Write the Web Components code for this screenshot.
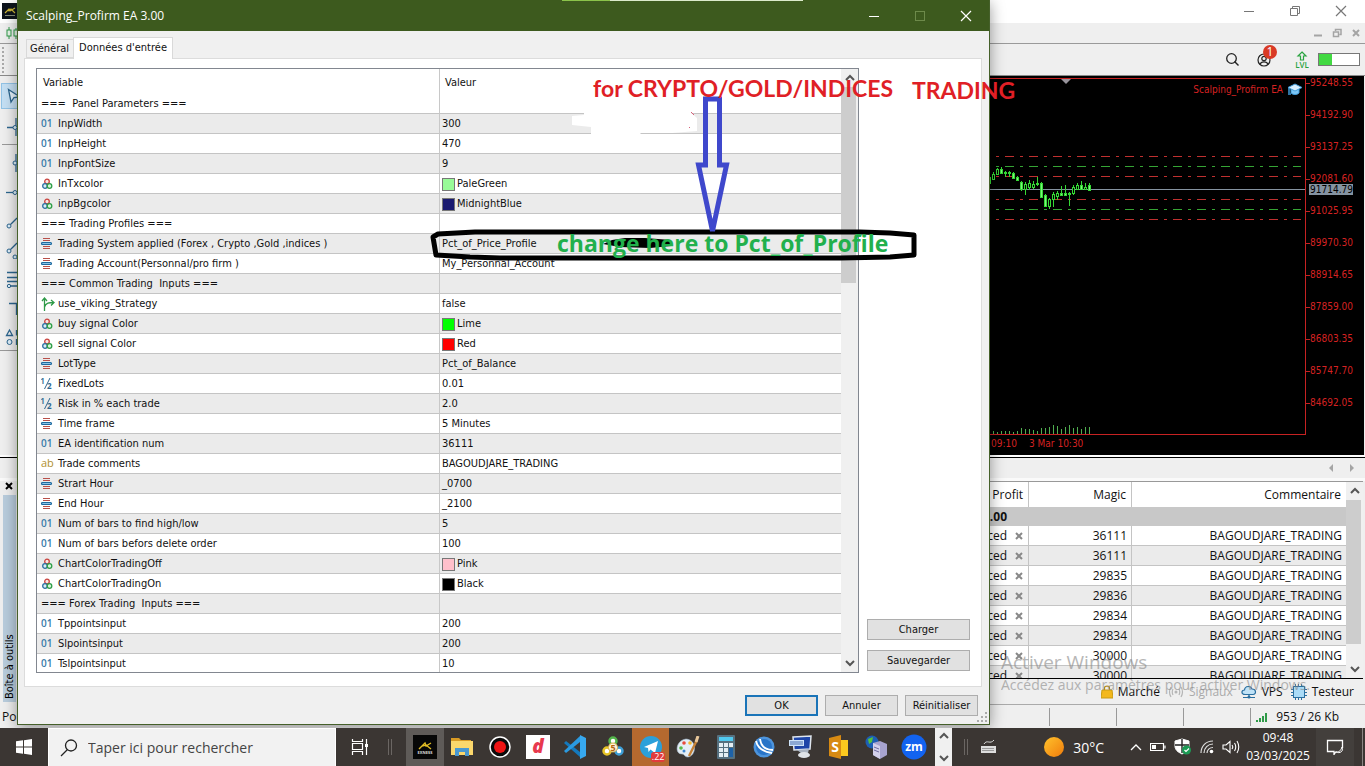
<!DOCTYPE html>
<html lang="fr">
<head>
<meta charset="utf-8">
<title>Scalping_Profirm EA 3.00</title>
<style>
html, body { margin: 0; height: 100%; overflow: hidden; }
body { font-family: "Open Sans", "Noto Sans", sans-serif; font-size: 12px; color: #111; }
</style>
</head>
<body>
<desktop-shell>
  <terminal-window></terminal-window>
  <inputs-dialog slot="window" heading="Scalping_Profirm EA 3.00"></inputs-dialog>
  <paint-notes slot="notes"></paint-notes>
  <task-bar slot="taskbar"></task-bar>
</desktop-shell>
<script>
const RESET = `
*{box-sizing:border-box}
button{font:inherit;color:inherit;background:none;border:0;padding:0;margin:0;display:flex;align-items:center;justify-content:center}
table{border-collapse:separate;border-spacing:0;table-layout:fixed;width:100%}
td,th{padding:0;font-weight:400;text-align:left;white-space:nowrap}
ul{list-style:none;margin:0;padding:0}`;

class Base extends HTMLElement {
  constructor() {
    super();
    this.attachShadow({ mode: 'open' });
  }
  connectedCallback() {
    this.shadowRoot.innerHTML = `<style>${RESET}${this.css()}</style>${this.html()}`;
  }
}

/* ---------- icons ---------- */
const P = (d, s = '#333', w = 1, f = 'none') => `<path d="${d}" fill="${f}" stroke="${s}" stroke-width="${w}"/>`;
const ICONS = {
  int: [14, 14, `<text x="0" y="10" font-size="10" font-weight="600" fill="#3a7ba8" font-family="Open Sans">01</text>`],
  str: [14, 14, `<text x="0" y="10" font-size="11" fill="#b0902e" font-family="Open Sans">ab</text>`],
  dbl: [14, 14, `<text x="-1" y="7" font-size="9" font-weight="600" fill="#2c668f" font-family="Open Sans">1</text><text x="6" y="12" font-size="8" font-weight="700" fill="#2c668f" font-family="Open Sans">2</text>` + P('M9 1L3.500 12', '#2c668f')],
  col: [14, 14, `<g stroke-width="1.300"><circle cx="6" cy="4.500" r="2.300" fill="#fbe6e4" stroke="#c9443f"/><circle cx="4" cy="9" r="2.300" fill="#d9ecf8" stroke="#2a6fa0"/><circle cx="8.500" cy="9" r="2.300" fill="#d8f5dd" stroke="#2e9e47"/></g>`],
  enum: [14, 14, P('M2 1.500H9M2 3.500H9M2 9.500H9M2 11.500H9', '#b9504a') + `<rect x=".5" y="5.500" width="10" height="2" rx="1" fill="#8cc4e6" stroke="#1f6aa0" stroke-width="1.200"/>`],
  bool: [14, 14, P('M3.500 14V1.500M1 4L3.500 1L6 4M3.500 10C5 5.500 8 5.500 13 5.500M10 3L13 5.500L10 8.500', '#2f9a48', 1.3)],
  min: [12, 12, P('M1 6.500H11', 'currentColor')],
  max: [12, 12, `<rect x="1.500" y="1.500" width="9" height="9" fill="none" stroke="currentColor"/>`],
  close: [12, 12, P('M1 1L11 11M11 1L1 11', 'currentColor', 1.2)],
  restore: [12, 12, P('M1.500 3.500H8.500V10.500H1.500ZM3.500 3V1.500H10.500V8.500H9', 'currentColor')],
  bmin: [10, 10, P('M1 7.500H9', 'currentColor', 2)],
  bres: [10, 10, P('M1.500 4H6.500V8.500H1.500ZM3.500 3V1.500H9V6.500H7.500', 'currentColor', 1.5)],
  bclose: [10, 10, P('M2 2L8 8M8 2L2 8', 'currentColor', 2)],
  up: [12, 12, P('M2 8L6 4L10 8', '#555', 2)],
  down: [12, 12, P('M2 4L6 8L10 4', '#555', 2)],
  left: [6, 8, P('M5 0V8L1 4Z', 'none', 0, '#a5a5a5')],
  right: [6, 8, P('M1 0V8L5 4Z', 'none', 0, '#a5a5a5')],
  find: [16, 16, P('M9.500 9.500L13.500 13.500', '#222', 1.4) + `<circle cx="6.500" cy="6.500" r="4.800" fill="none" stroke="#222" stroke-width="1.300"/>`],
  user: [14, 14, `<circle cx="7" cy="7" r="6" fill="none" stroke="#222" stroke-width="1.200"/><circle cx="7" cy="5.500" r="2.200" fill="none" stroke="#222" stroke-width="1.200"/>` + P('M3 11.500C4 8 10 8 11 11.500', '#222', 1.2)],
  lvl: [14, 18, P('M7 1L11 5H8.500V9H5.500V5H3Z', '#29a33f', 1.2) + `<text x="7" y="17" text-anchor="middle" font-size="8" font-weight="600" fill="#29a33f" font-family="Open Sans">LVL</text>`],
  cap: [16, 14, P('M4 6V10C6 12 10 12 12 10V6', '#3f9bd8', 1, '#7cc6f5') + P('M8 1L15 4.500L8 8L1 4.500Z', '#3f9bd8', 1, '#d9f0ff') + P('M2 5V10M1 11H4', '#3f9bd8', 1.5)],
  brand: [16, 16, `<rect width="16" height="16" fill="#0d141c"/>` + P('M3 10L7 6L8 8L13 5M6 8L9 6L13 10', '#cdb637', 1.2) + P('M3 12.500H13', '#87907a')],
  candles: [11, 12, P('M3 0V12M10 1V12', '#2f9a48') + `<rect x="1" y="3" width="4" height="6" fill="#e9f6ea" stroke="#2f9a48"/><rect x="8" y="3" width="4" height="6" fill="#e9f6ea" stroke="#2f9a48"/>`],
  tcur: [10, 16, P('M1.500 1.500L13 9L7 9.500L4 14Z', '#2c668f', 1.3, '#e5f2fb')],
  tcross: [12, 18, P('M2 9.500H8M11 0V18', '#2c668f', 1.3) + `<circle cx="10" cy="9.500" r="2" fill="#dff0fb" stroke="#2c668f"/>`],
  tv: [12, 18, P('M11 0V18', '#2c668f', 1.3) + `<circle cx="10" cy="9" r="2" fill="#dff0fb" stroke="#2c668f"/>`],
  th: [12, 18, P('M1 9.500H8', '#2c668f', 1.3) + `<circle cx="10" cy="9.500" r="2" fill="#dff0fb" stroke="#2c668f"/>`],
  tt: [12, 18, P('M5 13L12 6', '#2c668f', 1.3) + `<circle cx="4" cy="14" r="2" fill="#dff0fb" stroke="#2c668f"/>`],
  tch: [12, 18, P('M5 9L12 2', '#2c668f', 1.3) + `<circle cx="4" cy="10" r="2" fill="#dff0fb" stroke="#2c668f"/><circle cx="10" cy="16" r="2" fill="#dff0fb" stroke="#2c668f"/>`],
  tf: [12, 18, P('M2 2.500H12M2 7.500H12M2 11.500H12M5 16H12', '#2c668f', 1.3) + `<circle cx="4" cy="16" r="1.700" fill="#dff0fb" stroke="#2c668f"/>`],
  ttx: [12, 18, P('M4 4.500H12M11.500 4V16', '#2c668f', 1.3)],
  tsh: [12, 18, P('M4.500 2L7.500 7.500H1.500ZM11.500 2V7.500M11.500 11V17', '#2c668f', 1.3) + `<circle cx="4.500" cy="14" r="2.500" fill="#dff0fb" stroke="#2c668f"/>`],
  bag: [12, 14, P('M3.500 5V3C3.500 .5 8.500 .5 8.500 3V5', '#b58b1a', 1.2) + P('M1 5H11L12 13H0Z', '#c99b12', 1, '#f3b81c')],
  sig: [16, 12, P('M3 1Q0 6 3 11M5 3Q3.500 6 5 9M13 1Q16 6 13 11M11 3Q12.500 6 11 9', '#b5b5b5', 1.2) + `<circle cx="8" cy="6" r="1.500" fill="#b5b5b5"/>`],
  cloud: [16, 14, P('M4 9.500C0 9.500 0 5 3.500 5C4 .5 10 .5 11 4C15.500 4 15.500 9.500 12 9.500Z', '#2a6fa0', 1.2, '#bfe2f7') + P('M8 9.500V12M2 12.500H14', '#2a6fa0', 1.2) + `<circle cx="8" cy="12" r="1.500" fill="#2a6fa0"/>`],
  chip: [16, 16, P('M4.500 0V16M7.500 0V16M10.500 0V16M0 5.500H16M0 8.500H16M0 11.500H16', '#2a6fa0') + `<rect x="2.500" y="2.500" width="11" height="11" fill="#a9dbf7" stroke="#2a6fa0"/>`],
  bars: [12, 10, P('M1 10V8M4 10V6M7 10V4M10 10V1', '#2f9a48', 2)],
  win: [16, 16, `<g fill="#fff"><path d="M0 2.300L7 1.300V7.500H0ZM8 1.200L16 0V7.500H8ZM0 8.500H7V14.700L0 13.700ZM8 8.500H16V16L8 14.800Z"/></g>`],
  mag: [18, 18, P('M7.500 10.500L1 17', '#222', 1.3) + `<circle cx="11" cy="6.500" r="5.500" fill="none" stroke="#222" stroke-width="1.300"/>`],
  tview: [18, 16, P('M1.500 0V2.500H11.500V0M1.500 16V12.500H11.500V16M1.500 4.500H11.500V10.500H1.500ZM15.500 0V16', '#fff', 1.2) + `<rect x="14" y="5" width="3" height="3" fill="#fff"/>`],
  exness: [24, 24, `<rect width="24" height="24" fill="#070707"/>` + P('M6 14L12 8L13 11L18 8M9 11L13 10L18 14', '#e2bd25', 1.4) + `<text x="12" y="19" text-anchor="middle" font-size="4" font-weight="700" fill="#ddd" font-family="Open Sans">EXNESS</text>`],
  folder: [22, 20, P('M0 1H8L10 3H20V8H0Z', 'none', 0, '#d99b24') + `<rect y="4" width="22" height="14" fill="#fbd76c"/>` + P('M4 19V11H18V19H14V15H8V19Z', 'none', 0, '#4a98d0')],
  rec: [22, 22, `<circle cx="11" cy="11" r="10" fill="#0b0b0b" stroke="#fff" stroke-width="1.500"/><circle cx="11" cy="11" r="6" fill="#f01414"/>`],
  dd: [24, 24, `<rect width="24" height="24" fill="#fff"/>` + `<text x="12" y="18" text-anchor="middle" font-size="19" font-weight="800" font-style="italic" fill="#e8394e" font-family="Open Sans">d</text>`],
  code: [24, 24, P('M1 8L3 6L17 17V22Z', 'none', 0, '#1479bd') + P('M1 16L3 18L17 7V1Z', 'none', 0, '#2b9ae0') + P('M17 0L23 3V21L17 24Z', 'none', 0, '#37a9f0')],
  mt5: [22, 22, `<circle cx="11" cy="5" r="3.500" fill="#fff" stroke="#54b64c" stroke-width="2.500"/><circle cx="5" cy="15" r="3.500" fill="#fff" stroke="#e6c427" stroke-width="2.500"/><circle cx="17" cy="15" r="3.500" fill="#fff" stroke="#3d9fd8" stroke-width="2.500"/><circle cx="11" cy="11.500" r="4.500" fill="#fff6d8" stroke="#d8b04a"/><text x="11" y="15" text-anchor="middle" font-size="9" font-weight="700" fill="#b5640f" font-family="Open Sans">5</text>`],
  tg: [24, 24, `<circle cx="12" cy="12" r="11" fill="#2ba0da"/>` + P('M5 12L19 6L16 18L11.500 14.500L9.500 17L9 13Z', 'none', 0, '#fff')],
  paint: [24, 22, P('M10 3C0 4 -2 18 6 18C9 18 8 21 12 21C20 20 22 4 10 3Z', '#9fb6c9', .6, '#e4edf4') + `<circle cx="5" cy="12" r="1.800" fill="#57b947"/><circle cx="8" cy="7" r="1.800" fill="#e84b3b"/><circle cx="14" cy="7" r="1.800" fill="#f4b72e"/><circle cx="8" cy="15" r="1.500" fill="#3d86d0"/>` + P('M13 20L21 4', '#c58136', 2.4) + P('M20 6L22 0', '#e8c79a', 3)],
  calc: [18, 24, `<rect width="18" height="24" rx="1" fill="#56707f"/><rect x="2" y="2" width="14" height="4" fill="#51c9ef"/><g fill="#e4eef4"><path d="M2 8h4v4H2zM7 8h4v4H7zM12 8h4v4h-4zM2 13h4v4H2zM7 13h4v4H7zM2 18h4v4H2zM7 18h4v4H7z"/></g><rect x="12" y="13" width="4" height="9" fill="#1d62a8"/>`],
  blue: [22, 22, `<circle cx="11" cy="11" r="10.500" fill="#4d94dc"/><circle cx="11" cy="11" r="8" fill="#2874c8"/>` + P('M3 5C5 13 11 16 19 17M7 3C8 11 13 14 20 14', '#fff', 1.8)],
  pc: [24, 24, P('M4 2L22 1L21 14L5 15Z', '#dfe6ee', 1.5, '#1e45a8') + P('M8 15L20 14L19 18L12 18Z', 'none', 0, '#aab4c2') + `<ellipse cx="15" cy="20" rx="6" ry="3" fill="#dfe3e8"/><rect x="0" y="5" width="15" height="6" fill="#cfe3f8"/>` + P('M1 7H14M1 9H14', '#4b6fae', 1)],
  s5: [20, 24, `<rect x="8" y="5" width="11" height="16" fill="#fbc91f"/>` + P('M0 3L12 0V24L0 21Z', 'none', 0, '#d78a12') + `<text x="6" y="17" text-anchor="middle" font-size="14" font-weight="700" fill="#fff" font-family="Open Sans">S</text>`],
  srv: [24, 24, `<circle cx="7" cy="7" r="6.500" fill="#1d5fb4"/>` + P('M3 4L8 2L7 7L4 9Z', 'none', 0, '#54c23c') + P('M8 8L15 6L22 9V20L15 24L8 20Z', 'none', 0, '#a7a3cf') + P('M8 8L15 11V24L8 20Z', 'none', 0, '#d4d1ec') + P('M9 12L14 14M9 15L14 17', '#6d699f', 1)],
  zm: [26, 26, `<circle cx="13" cy="13" r="12.500" fill="#1263f0"/><text x="13" y="17" text-anchor="middle" font-size="12" font-weight="700" fill="#fff" font-family="Open Sans">zm</text>`],
  kb: [16, 16, `<rect x="0" y="7" width="15" height="7" fill="#ddd"/>` + P('M1.500 9.500H13.500M1.500 11.500H13.500', '#555', 1) .replace('/>', ' stroke-dasharray="1 1"/>') + P('M3 5C6 0 9 6 13 1', '#ddd', 1)],
  chev: [12, 8, P('M1 7L6 2L11 7', '#fff', 1.3)],
  batt: [16, 10, P('M.5 1.500H13.500V8.500H.5ZM15 3.500V6.500', '#fff', 1.2) + `<rect x="2" y="3" width="4" height="4" fill="#fff"/>`],
  shield: [18, 18, P('M8 1L15 3V8C15 12 12 14 8 16C4 14 1 12 1 8V3Z', '#fff', 1, '#fff') + P('M8 1V15M1 7H15', '#222', 1.4) + `<circle cx="12.500" cy="12" r="4.500" fill="#1c9b55"/>` + P('M10.500 12L12 13.500L15 10.500', '#fff', 1.2)],
  wifi: [14, 14, P('M1 13C1 6 6 1 13 1M4 13C4 8 8 4 13 4M7 13C7 10 9.500 7.500 13 7.500', '#ddd', 1.2) + `<circle cx="11.500" cy="11.500" r="1.800" fill="#fff"/>`],
  vol: [18, 14, P('M1 5H4L8 1.500V12.500L4 9H1ZM10 5Q11.500 7 10 9M12.500 3Q15 7 12.500 11M15 1Q18.500 7 15 13', '#fff', 1.1)],
  note: [18, 16, P('M10 12.500L8 15.500V12.500H1.500V1.500H16.500V9', '#fff', 1.3) + P('M16 8C18 12 14 15 10 13C14 13 15 11 16 8Z', '#fff', 1)],
};
class UiIcon extends Base {
  css() { return `:host{display:inline-flex;flex:none}svg{display:block;overflow:hidden}`; }
  html() {
    const [w, h, body] = ICONS[this.getAttribute('name')];
    return `<svg width="${w}" height="${h}" viewBox="0 0 ${w} ${h}" aria-hidden="true">${body}</svg>`;
  }
}
const ic = n => `<ui-icon name="${n}"></ui-icon>`;

class ScrollRail extends Base {
  css() {
    return `:host{display:flex;flex-direction:column;width:17px;background:#f0f0f0;flex:none}
    button{height:18px;flex:none}
    .thumb{height:var(--thumb,50%);background:#cdcdcd;margin:0 2px 0 0}
    .rest{flex:1}`;
  }
  html() { return `<button aria-label="Haut">${ic('up')}</button><div class="thumb"></div><div class="rest"></div><button aria-label="Bas">${ic('down')}</button>`; }
}

/* ---------- chart ---------- */
class ChartPanel extends Base {
  css() {
    return `:host{display:flex;flex:1;min-width:0;background:#000;color:#d62222;font:10px/12px "DejaVu Sans Condensed",sans-serif;margin-right:1px;position:relative}
    .left{flex:1;min-width:0;display:flex;flex-direction:column;padding-top:2px}
    .plot{flex:1;border-top:1px solid #c62222;border-right:1px solid #c62222;border-bottom:1px solid #c62222;display:flex;justify-content:flex-end;overflow:hidden;min-height:0}
    svg{flex:none;display:block}
    .times{height:20px;display:flex;justify-content:flex-end;padding:3px 0 0}
    .times span:first-child{width:38px}.times span:last-child{width:277px}
    .axis{width:58px;display:flex;flex-direction:column;gap:20px;padding-top:1px}
    .axis li{display:flex;align-items:center}.axis li:before{content:"";width:4px;height:1px;background:#c62222}
    .name{position:absolute;right:61px;top:7px;display:flex;align-items:center;gap:4px}
    .now{position:absolute;right:11px;top:108px;background:#8593a1;color:#000;padding:0 0 0 1px;line-height:11px}`;
  }
  html() {
    const c = [[528,552,530,550,1],[515,540,522,537,0],[504,525,508,522,0],[500,522,508,518,1],[512,532,515,520,1],[512,532,515,520,1],[516,537,518,535,1],[528,542,530,540,1],[542,572,545,568,1],[545,585,552,568,0],[540,570,550,562,0],[542,568,552,562,0],[530,558,548,553,1],[546,594,548,592,1],[582,622,584,618,1],[594,628,596,618,0],[576,622,582,596,0],[574,600,580,588,0],[558,588,578,584,1],[556,586,579,584,1],[576,617,578,583,1],[556,586,560,580,0],[550,570,556,566,0],[542,570,556,568,1],[548,570,560,568,0],[548,571,556,570,1]];
    const vol = [3,3,2,3,3,3,2,3,6,5,5,4,3,6,6,7,9,8,5,7,9,6,7,5,7,7];
    const top = 79;
    let s = '';
    [[157,'#c03030'],[167,'#35a535'],[177,'#c03030'],[200,'#c03030'],[210,'#35a535'],[220,'#c03030']].forEach(([y, k]) => {
      s += `<line x1="0" x2="316" y1="${y - top - .5}" y2="${y - top - .5}" stroke="${k}" stroke-dasharray="9 6 3 6" stroke-dashoffset="4"/>`;
    });
    s += `<line x1="0" x2="320" y1="110.500" y2="110.500" stroke="#8593a1"/>`;
    c.forEach(([h, l, a, b, f], i) => {
      const x = 4 + i * 4, q = v => Math.round(v / 3) - top;
      s += `<path d="M${x + .5} ${q(h)}V${q(l)}" stroke="#35d935"/><rect x="${x - .5}" y="${q(a) + .5}" width="2" height="${Math.max(1, q(b) - q(a))}" fill="${f ? '#7cf57c' : '#000'}" stroke="#35d935"/>`;
      s += `<path d="M${x + .5} 355V${355 - vol[i]}" stroke="#4fae4f"/>`;
    });
    s += `<path d="M76 0H86L81 5Z" fill="#98949c"/>`;
    const prices = ['95248.55','94192.90','93137.25','92081.60','91025.95','89970.30','88914.65','87859.00','86803.35','85747.70','84692.05'];
    return `<div class="left"><div class="plot"><svg width="320" height="355" viewBox="0 0 320 355">${s}</svg></div><div class="times"><span>09:10</span><span>3 Mar 10:30</span></div></div>
    <ul class="axis">${prices.map(p => `<li>${p}</li>`).join('')}</ul>
    <div class="name"><span>Scalping_Profirm EA</span>${ic('cap')}</div><div class="now">91714.79</div>`;
  }
}

/* ---------- toolbox ---------- */
class TradeTable extends Base {
  css() {
    return `:host{display:flex;flex:1;min-height:0;border-top:1px solid #999;border-bottom:1px solid #000;margin-right:2px;overflow:hidden}
    .view{flex:1;min-width:0;overflow:hidden;background:#fff}
    th,td{text-align:right;border-right:1px solid #c4c4c4;border-bottom:1px solid #c4c4c4;height:20px;padding-right:4px;line-height:18px}
    th{height:25px;padding-right:5px;border-bottom:0}
    tr>:last-child{border-right:0}
    tr.sum td{background:#c8c8c8;font-weight:700;height:19px;border:0;line-height:16px}
    tr.sum td:first-child{padding-right:22px}
    tbody tr:nth-child(odd):not(.sum) td{background:#ebebeb}
    .p{display:flex;justify-content:flex-end;align-items:center;gap:7px;color:#111}
    .x{color:#888;display:inline-flex}`;
  }
  html() {
    const m = [36111,36111,29835,29836,29834,29834,30000,30000];
    return `<div class="view"><table><colgroup><col><col style="width:103px"><col style="width:214px"></colgroup>
    <thead><tr><th>Profit</th><th>Magic</th><th>Commentaire</th></tr></thead>
    <tbody><tr class="sum"><td>.00</td><td></td><td></td></tr>
    ${m.map(v => `<tr><td><span class="p">ced <button class="x" aria-label="Fermer">${ic('bclose')}</button></span></td><td>${v}</td><td>BAGOUDJARE_TRADING</td></tr>`).join('')}</tbody></table></div>
    <scroll-rail style="--thumb:144px"></scroll-rail>`;
  }
}

/* ---------- terminal ---------- */
class TerminalWindow extends Base {
  css() {
    return `:host{display:flex;flex-direction:column;flex:1;min-height:0;background:#efefef;position:relative}
    .title{height:23px;background:#fff;display:flex;align-items:center;padding:0 18px 2px 2px;color:#777}
    .sp{flex:1}
    .title button{width:12px;margin-left:34px}
    .menu{height:21px;border-bottom:1px solid #9a9a9a;display:flex;align-items:center;padding:0 4px 0 6px;gap:9px;color:#a4a4a4}
    .tools{height:32px;border-bottom:1px solid #8a8a8a;display:flex;align-items:center;padding:0 5px 0 2px}
    .grip{width:3px;height:26px;border-left:2px dotted #aaa}
    .tools button{margin-right:16px}
    .acct{position:relative}
    .acct b{position:absolute;left:6px;top:-8px;width:14px;height:14px;border-radius:7px;background:#d93a25;color:#fff;font:12px/14px "Open Sans";text-align:center}
    .lv{display:flex;margin:0 9px 0 8px}
    .lvl{width:42px;height:13px;border:1px solid #777;background:#fff}.lvl i{display:block;width:13px;height:11px;background:#42d942}
    .mid{flex:1;display:flex;min-height:0}
    .side{width:17px;display:flex;flex-direction:column;flex:none;overflow:hidden}
    .side .in{border-bottom:1px solid #999;padding:7px 0 0;height:275px}
    .side button{width:17px;height:29px;justify-content:flex-end;overflow:hidden}
    .side button.on{background:#c5e0f4;border:1px solid #92c3e6;margin-left:1px;height:26px;margin-bottom:3px}
    .side hr{margin:3px 0 3px 2px;border:0;border-top:1px solid #999}
    .strip{height:26px;border-top:2px solid #fff;display:flex;justify-content:flex-end;align-items:center;gap:15px;padding-right:10px;border-bottom:3px solid #fafafa;box-shadow:inset 0 1px #000}
    .box{display:flex;height:224px}
    .lab{width:17px;flex:none;display:flex;flex-direction:column;align-items:center;color:#000}
    .lab div{flex:1;width:13px;background:#b9cddd;margin:4px 0 3px 1px;display:flex;align-items:flex-start;justify-content:flex-start;overflow:hidden}
    .lab span{writing-mode:vertical-rl;transform:rotate(180deg);font:11px/13px "DejaVu Sans Condensed";white-space:nowrap;height:100%;padding-top:3px}
    .main{flex:1;min-width:0;display:flex;flex-direction:column}
    .tabs{height:26px;display:flex;justify-content:flex-end;align-items:center;padding:0 11px 0 0;gap:8px;border-bottom:1px solid #aaa}
    .tabs button{gap:5px;white-space:nowrap}
    .off{color:#aaa}
    .status{height:23px;display:flex;align-items:center;padding:0 26px 0 2px}
    .status i{width:1px;height:18px;background:#999;margin-right:66px}
    .status i.end{margin-right:5px}
    .status span{white-space:nowrap}
    .status .kb{margin-left:8px}
    .wm{position:absolute;left:1001px;right:0;top:650px;color:#888;opacity:.6;white-space:nowrap;overflow:hidden;font-size:14px;line-height:20px}
    .wm b{font-weight:400;font-size:19px;line-height:25px;display:block}`;
  }
  html() {
    return `<div class="title">${ic('brand')}<div class="sp"></div><button aria-label="Réduire">${ic('min')}</button><button aria-label="Restaurer">${ic('restore')}</button><button aria-label="Fermer">${ic('close')}</button></div>
    <div class="menu">${ic('candles')}<div class="sp"></div><button aria-label="Réduire">${ic('bmin')}</button><button aria-label="Restaurer">${ic('bres')}</button><button aria-label="Fermer">${ic('bclose')}</button></div>
    <div class="tools"><div class="grip"></div><div class="sp"></div><button aria-label="Rechercher">${ic('find')}</button><button class="acct" aria-label="Compte">${ic('user')}<b>1</b></button><span class="lv">${ic('lvl')}</span><div class="lvl"><i></i></div></div>
    <div class="mid"><div class="side"><div class="in"><button class="on">${ic('tcur')}</button><button>${ic('tcross')}</button><hr>${['tv','th','tt','tch','tf','ttx','tsh'].map(n => `<button>${ic(n)}</button>`).join('')}</div></div><chart-panel></chart-panel></div>
    <div class="strip">${ic('left')}${ic('right')}</div>
    <div class="box"><div class="lab"><ui-icon name="bclose"></ui-icon><div><span>Boîte à outils</span></div></div>
      <div class="main"><trade-table></trade-table>
      <div class="tabs"><button>${ic('bag')}Marché</button><button class="off">${ic('sig')}Signaux</button><button>${ic('cloud')}VPS</button><button>${ic('chip')}Testeur</button></div></div></div>
    <div class="status"><span>Po</span><div class="sp"></div><i></i><i></i><i></i><i class="end"></i>${ic('bars')}<span class="kb">953 / 26 Kb</span></div>
    <div class="wm"><b>Activer Windows</b>Accédez aux paramètres pour activer Windows.</div>`;
  }
}

/* ---------- dialog ---------- */
const ROWS = [
  ['', '=== &nbsp;Panel Parameters ===', ''],
  ['int', 'InpWidth', '300'], ['int', 'InpHeight', '470'], ['int', 'InpFontSize', '9'],
  ['col', 'InTxcolor', 'PaleGreen', '#98fb98'], ['col', 'inpBgcolor', 'MidnightBlue', '#191970'],
  ['', '=== Trading Profiles ===', ''],
  ['enum', 'Trading System applied (Forex , Crypto ,Gold ,indices )', 'Pct_of_Price_Profile'],
  ['enum', 'Trading Account(Personnal/pro firm )', 'My_Personnal_Account'],
  ['', '=== Common Trading &nbsp;Inputs ===', ''],
  ['bool', 'use_viking_Strategy', 'false'],
  ['col', 'buy signal Color', 'Lime', '#00ff00'], ['col', 'sell signal Color', 'Red', '#ff0000'],
  ['enum', 'LotType', 'Pct_of_Balance'], ['dbl', 'FixedLots', '0.01'], ['dbl', 'Risk in % each trade', '2.0'],
  ['enum', 'Time frame', '5 Minutes'], ['int', 'EA identification num', '36111'],
  ['str', 'Trade comments', 'BAGOUDJARE_TRADING'], ['enum', 'Strart Hour', '_0700'], ['enum', 'End Hour', '_2100'],
  ['int', 'Num of bars to find high/low', '5'], ['int', 'Num of bars befors delete order', '100'],
  ['col', 'ChartColorTradingOff', 'Pink', '#ffc0cb'], ['col', 'ChartColorTradingOn', 'Black', '#000000'],
  ['', '=== Forex Trading &nbsp;Inputs ===', ''],
  ['int', 'Tppointsinput', '200'], ['int', 'Slpointsinput', '200'], ['int', 'Tslpointsinput', '10'],
];
class InputsDialog extends Base {
  css() {
    return `:host{position:absolute;left:17px;right:375px;top:0;bottom:3px;display:flex;flex-direction:column;background:#f0f0f0;border:1px solid #45602a;border-top:0;box-shadow:0 3px 14px rgba(0,0,0,.4);font:11px/16px "DejaVu Sans Condensed","Noto Sans",sans-serif}
    header{height:31px;background:#3d5a1e;color:#fff;display:flex;align-items:center;padding:0 17px 0 8px;font:12px/16px "Open Sans";position:relative;flex:none}
    header:before{content:"";position:absolute;top:0;left:56%;width:48px;height:1px;background:#8bc34a}
    header:after{content:"";position:absolute;top:0;left:61%;width:193px;height:1px;background:#dcebcb}
    header span{flex:1}
    header button{width:12px;margin-left:34px}
    header button:disabled{color:#6d8a4a}
    .tabs{display:flex;align-items:flex-end;height:28px;padding-left:8px;flex:none;position:relative;z-index:1;margin-bottom:-1px}
    .tabs button{border:1px solid #d9d9d9;padding:0 4px 0 3px;height:19px;margin-bottom:1px;border-right:0}
    .tabs button.on{background:#fff;height:22px;margin-bottom:0;border-right:1px solid #d9d9d9;border-bottom:0;padding:0 5px 2px}
    .page{flex:1;min-height:0;margin:0 7px 0 6px;background:#fff;border:1px solid #dcdcdc;display:flex;padding:9px 11px 13px 11px;gap:8px}
    .grid{flex:1;min-width:0;border:1px solid #828790;display:flex;overflow:hidden}
    .view{flex:1;min-width:0;overflow:hidden}
    th{height:25px;padding:2px 6px 0}
    th+th{padding-left:5px}
    th+th,td+td{border-left:1px solid #c8c8c8}
    td{height:20px;border-bottom:1px solid #c4c4c4;padding-left:3px}
    td+td{padding-left:2px}
    tr:nth-child(even) td{background:#ebebeb}
    td>div{display:flex;align-items:center;gap:2px;height:19px;padding-top:1px}
    td:first-child>div{gap:3px;padding-left:1px}
    .sw{width:13px;height:13px;border:1px solid #777}
    .side{width:103px;display:flex;flex-direction:column;justify-content:flex-end;gap:10px;padding-bottom:2px}
    .side button,footer button{height:21px;background:#e1e1e1;border:1px solid #adadad;width:100%}
    footer{display:flex;justify-content:flex-end;gap:7px;padding:8px 11px 8px 0;flex:none}
    footer button{width:73px}
    footer button.ok{border:2px solid #1a74b8}
    .size{position:absolute;right:2px;bottom:2px;display:block}`;
  }
  html() {
    const rows = ROWS.map(([k, n, v, c]) => `<tr><td><div>${k ? ic(k) : ''}<span>${n}</span></div></td><td><div>${c ? `<i class="sw" style="background:${c}"></i>` : ''}<span>${v}</span></div></td></tr>`).join('');
    return `<header><span>${this.getAttribute('heading')}</span><button aria-label="Réduire">${ic('min')}</button><button disabled aria-label="Agrandir">${ic('max')}</button><button aria-label="Fermer">${ic('close')}</button></header>
    <div class="tabs" role="tablist"><button role="tab">Général</button><button role="tab" class="on" aria-selected="true">Données d'entrée</button></div>
    <div class="page"><div class="grid"><div class="view"><table><thead><tr><th>Variable</th><th>Valeur</th></tr></thead><tbody>${rows}</tbody></table></div><scroll-rail style="--thumb:196px"></scroll-rail></div>
    <div class="side"><button>Charger</button><button>Sauvegarder</button></div></div>
    <footer><button class="ok">OK</button><button>Annuler</button><button>Réinitialiser</button></footer>
    <svg class="size" width="10" height="10"><path d="M8 1h2M8 5h2M8 9h2M4 5h2M4 9h2M0 9h2" stroke="#aaa" stroke-width="2"/></svg>`;
  }
}

/* ---------- hand-drawn notes on top of the windows ---------- */
class PaintNotes extends Base {
  css() {
    return `:host{position:absolute;left:0;top:0;width:100%;height:300px;pointer-events:none;overflow:hidden}
    svg{position:absolute;left:0;top:0}
    p{position:absolute;margin:0;white-space:nowrap;font-weight:700}
    .r{color:#e01f26;font:700 23px/28px Lato,sans-serif}
    .g{color:#22b04c;font:700 23px/28px "Open Sans",sans-serif;left:557px;top:229px}`;
  }
  html() {
    return `<svg width="1100" height="300" stroke-linejoin="round">
    <path d="M572 116L584 115V112H690L697 118V131L672 133H641L640 134H591V127L572 125Z" fill="#fff"/><path d="M691 112l3 3M689 127l1 1" stroke="#d8607a"/>
    <path d="M603 244L612 240L625 238H645L671 240V246L650 248L620 247Z" fill="#000"/>
    <path d="M433 237L438 234L475 232H860L890 233L914 235L914 255L890 257L840 258H500L470 257L436 255Z" fill="none" stroke="#000" stroke-width="5"/>
    <path d="M705.500 99H719.500V165H726.500L712.500 231L698.500 165H705.500Z" fill="none" stroke="#3f48cc" stroke-width="5" stroke-linejoin="miter"/></svg>
    <p class="r" style="left:593px;top:74px">for CRYPTO/GOLD/INDICES</p><p class="r" style="left:912px;top:76px">TRADING</p>
    <p class="g">change here to Pct_of_Profile</p>`;
  }
}

/* ---------- taskbar ---------- */
class TaskBar extends Base {
  css() {
    return `:host{display:flex;height:38px;background:#3b3633;color:#fff;align-items:stretch;flex:none}
    .start{width:48px}
    label{display:flex;align-items:center;gap:10px;width:288px;background:#f2f2f2;padding-left:11px;border:1px solid #fff;border-bottom:0}
    input{border:0;outline:0;background:none;font:14px/20px "Open Sans";width:220px;padding:0}
    input::placeholder{color:#444;opacity:1}
    .tv{width:48px}.bar{width:4px;border:solid #6b6663;border-width:0 1px;height:16px;align-self:center;margin:0 14px 0 4px}
    .apps{display:flex;width:527px}
    .apps button{flex:1;position:relative}
    .apps .a{background:#5f5b58}.apps .t{background:#b5692f}
    .badge{position:absolute;right:4px;bottom:4px;background:#e23b3b;border-radius:3px;font-size:9px;line-height:10px;padding:0 1px}
    .pg{width:17px;background:#f0f0f0;display:flex;flex-direction:column;justify-content:space-between;align-items:center;margin-left:2px;padding:2px 0}
    .sp{flex:1}
    .bar.b{margin:0 13px 0 12px}
    .w{font-size:14px;gap:9px;margin-right:26px}
    .tray{display:flex;align-items:center;gap:8px}
    time{font-size:12px;line-height:18px;text-align:center;margin:0 8px;width:60px;white-space:nowrap;display:flex;flex-direction:column;align-items:center;justify-content:center}
    .n{width:38px;background:#433f3c;margin-right:8px}
    .end{width:1px;background:#8a8683;margin-right:2px}`;
  }
  html() {
    const apps = ['exness','folder','rec','dd','code','mt5','tg','paint','calc','blue','pc','s5','srv','zm'];
    return `<button class="start" aria-label="Démarrer">${ic('win')}</button>
    <label>${ic('mag')}<input type="text" placeholder="Taper ici pour rechercher" aria-label="Rechercher"></label>
    <button class="tv" aria-label="Vue des tâches">${ic('tview')}</button><div class="bar"></div>
    <div class="apps">${apps.map(a => `<button class="${a == 'exness' ? 'a' : a == 'tg' ? 't' : ''}" aria-label="${a}">${ic(a)}${a == 'tg' ? '<span class="badge">.22</span>' : ''}</button>`).join('')}</div>
    <div class="pg">${ic('up')}${ic('down')}</div><div class="bar b"></div><button aria-label="Clavier">${ic('kb')}</button><div class="sp"></div>
    <button class="w"><svg width="20" height="20"><defs><linearGradient id="s" x2="1" y2="1"><stop stop-color="#ffc22c"/><stop offset="1" stop-color="#f07c0c"/></linearGradient></defs><circle cx="10" cy="10" r="10" fill="url(#s)"/></svg>30°C</button>
    <div class="tray">${ic('chev')}${ic('batt')}${ic('shield')}${ic('wifi')}${ic('vol')}</div>
    <time><span>09:48</span><span>03/03/2025</span></time><button class="n" aria-label="Notifications">${ic('note')}</button><div class="end"></div>`;
  }
}

class DesktopShell extends Base {
  css() {
    return `:host{display:flex;flex-direction:column;height:100vh;overflow:hidden}
    .area{flex:1;min-height:0;display:flex;flex-direction:column;position:relative;overflow:hidden}`;
  }
  html() { return `<div class="area"><slot></slot><slot name="window"></slot><slot name="notes"></slot></div><slot name="taskbar"></slot>`; }
}

customElements.define('ui-icon', UiIcon);
customElements.define('scroll-rail', ScrollRail);
customElements.define('chart-panel', ChartPanel);
customElements.define('trade-table', TradeTable);
customElements.define('terminal-window', TerminalWindow);
customElements.define('inputs-dialog', InputsDialog);
customElements.define('paint-notes', PaintNotes);
customElements.define('task-bar', TaskBar);
customElements.define('desktop-shell', DesktopShell);
</script>
</body>
</html>
